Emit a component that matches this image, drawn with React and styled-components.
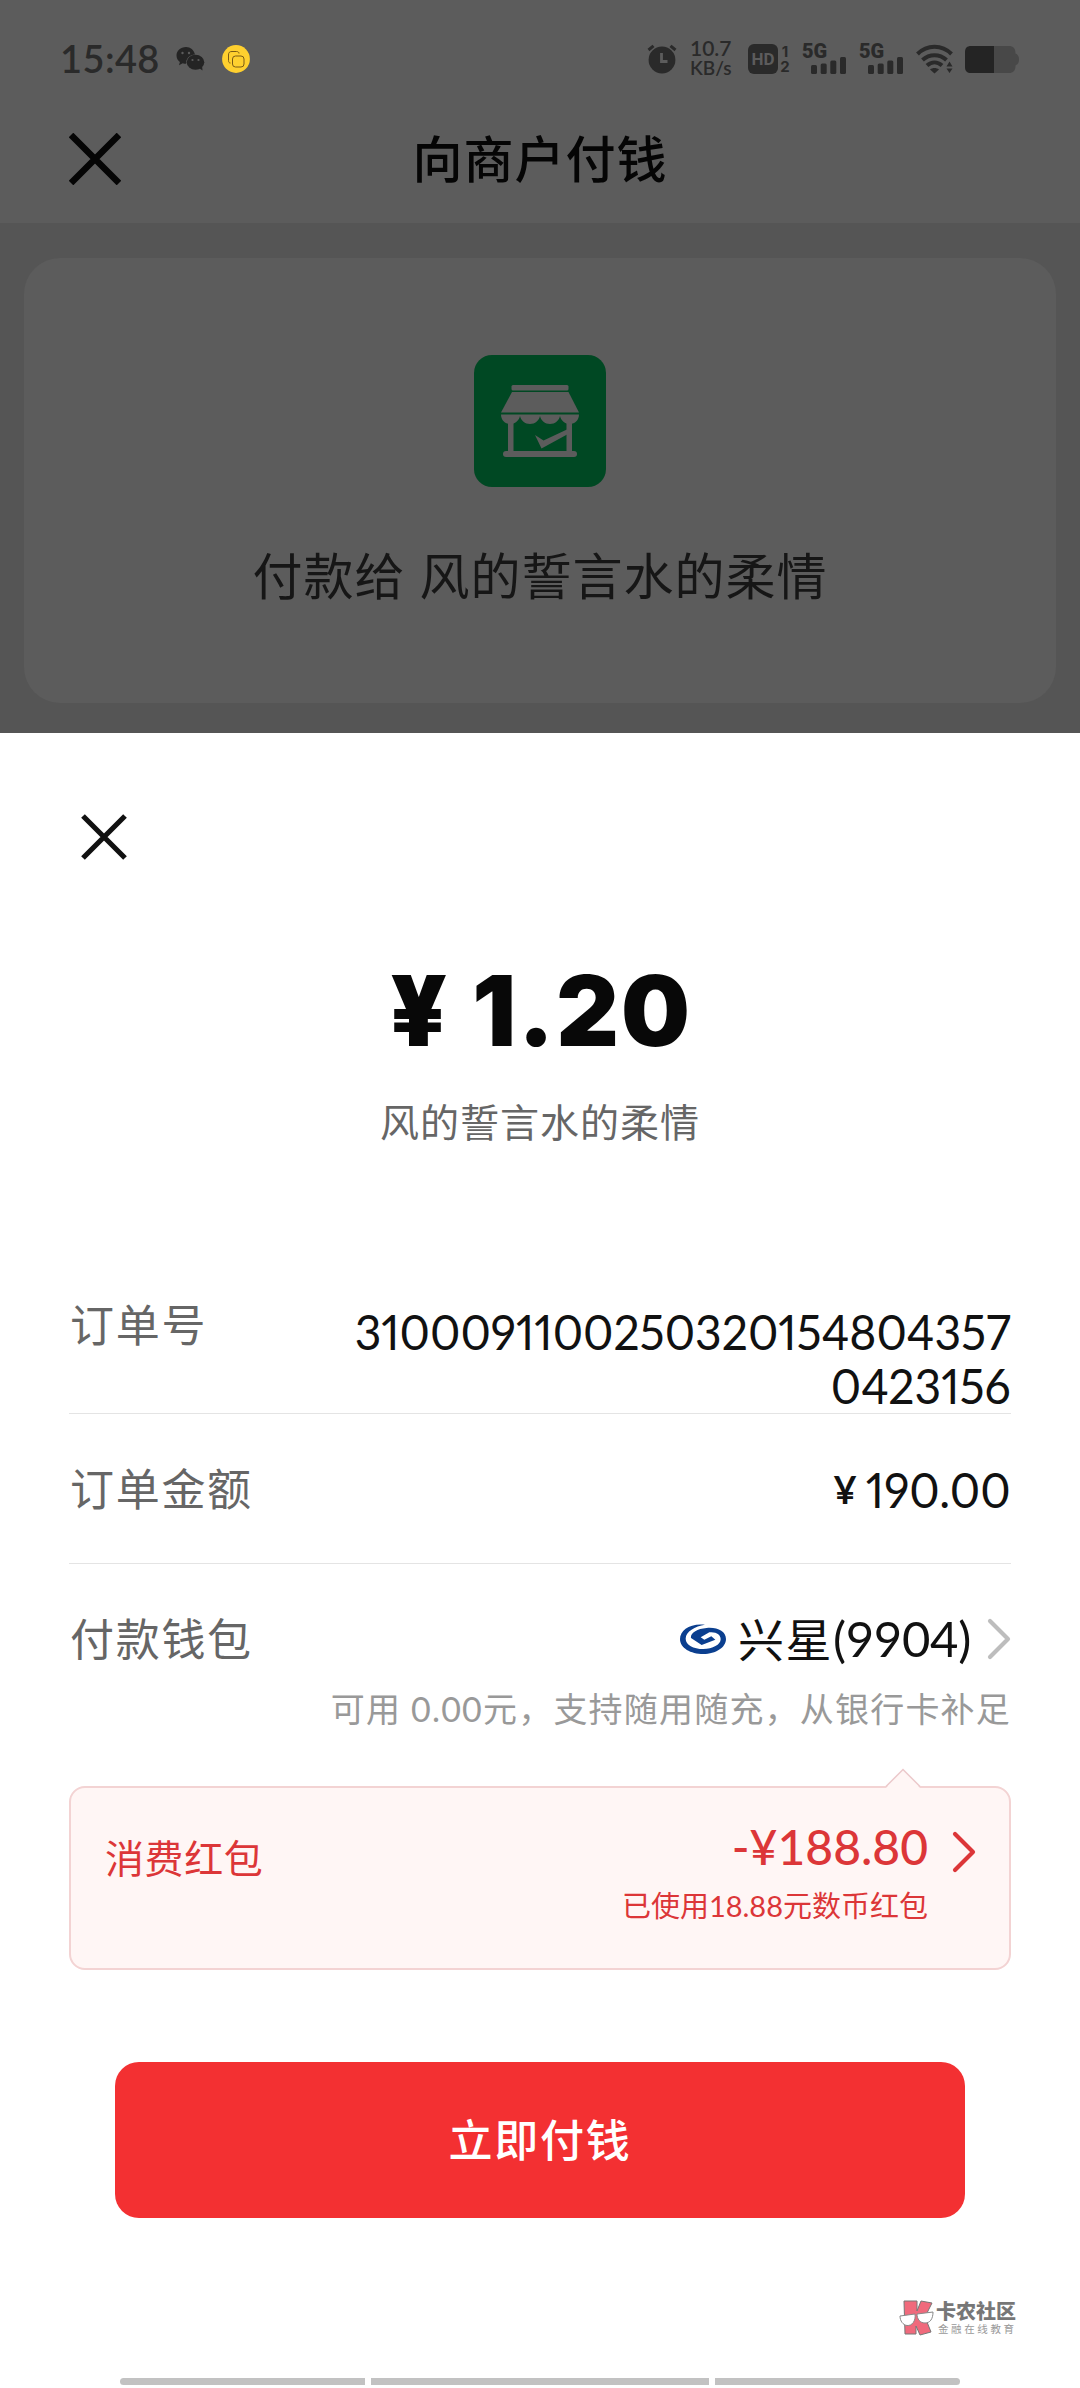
import React from 'react'
import styled, { createGlobalStyle } from 'styled-components'

const details = [
    { label: '订单号', value: ['3100091100250320154804357', '0423156'] },
    { label: '订单金额', value: ['190.00'], money: true },
]

function Close({ size, weight, color }) {
    return (
        <svg width={size} height={size} viewBox={`0 0 ${size} ${size}`} fill="none" stroke={color} strokeWidth={weight}>
            <path d={`M2 2L${size - 2} ${size - 2}M${size - 2} 2L2 ${size - 2}`} />
        </svg>
    )
}

function Chevron({ color }) {
    return (
        <svg width="24" height="42" viewBox="0 0 24 42" fill="none" stroke={color} strokeWidth="4.2" strokeLinecap="round" strokeLinejoin="round">
            <path d="M3 3L21 21L3 39" />
        </svg>
    )
}

function ChatIcon() {
    return (
        <svg width="30" height="26" viewBox="0 0 30 26">
            <path fill="#242424" d="M10 1C4.500 1 .5 4.800 .5 9.500c0 2.700 1.300 5 3.400 6.500L3 19.200l3.700-1.900c1.200.4 2.200.5 3.500.5-.5-5 3.300-9 8.800-9.200C18 4 14.500 1 10 1z" />
            <ellipse cx="19.500" cy="16.300" rx="8.800" ry="7.500" fill="#242424" />
            <path fill="#242424" d="M23 22l3.500 2.500-.5-5z" />
            <g fill="#5c5c5c">
                <circle cx="6.500" cy="7" r="1.200" />
                <circle cx="13" cy="7" r="1.200" />
                <circle cx="16.500" cy="14" r="1.100" />
                <circle cx="22.500" cy="14" r="1.100" />
            </g>
        </svg>
    )
}

function CopyBadge() {
    return (
        <svg width="28" height="28" viewBox="0 0 28 28">
            <circle cx="14" cy="14" r="13.900" fill="#ffd02f" />
            <g fill="none" stroke="#7a5a14" strokeWidth="1">
                <path d="M8.500 18C7 18 6.500 17 6.500 15.500V10C6.500 7.500 7.500 6.500 10 6.500h4.500c1.500 0 2.500.7 2.500 2" />
                <rect x="10.500" y="11" width="11.500" height="11" rx="3" />
            </g>
        </svg>
    )
}

function AlarmIcon() {
    return (
        <svg width="30" height="30" viewBox="0 0 30 30" fill="none">
            <circle cx="15" cy="16" r="13.400" fill="#2a2a2a" />
            <path d="M1.500 6L6.500 1.800M28.500 6L23.500 1.800" stroke="#2a2a2a" strokeWidth="3" />
            <path d="M14.500 9v8.500h6" stroke="#5c5c5c" strokeWidth="2.800" />
        </svg>
    )
}

function SignalBars() {
    return (
        <svg width="36" height="17" viewBox="0 0 36 17" fill="#2a2a2a">
            <rect x="0" y="8" width="6" height="9" rx="1.500" />
            <rect x="9.700" y="6.500" width="6" height="10.500" rx="1.500" />
            <rect x="19.300" y="3.500" width="6" height="13.500" rx="1.500" />
            <rect x="29" y="0" width="6" height="17" rx="1.500" />
        </svg>
    )
}

function WifiIcon() {
    return (
        <svg width="37" height="30" viewBox="0 0 37 30" fill="none" stroke="#2a2a2a" strokeWidth="4">
            <path d="M1.500 10C11 .3 26 .3 35.500 10" />
            <path d="M6.500 16C13.500 9.500 23.500 9.500 30.500 16" />
            <path d="M11 21.500c4.500-4 10.500-4 15 0" />
            <path d="M14 25.500c2.500-2 6.500-2 9 0L18.500 29.500z" fill="#2a2a2a" stroke="none" />
            <path d="M30.500 22.500L33.500 17.500L36.500 22.500zM30.500 24.500L33.500 29L36.500 24.500z" fill="#2a2a2a" stroke="none" />
        </svg>
    )
}

function BatteryIcon() {
    return (
        <svg width="54" height="27" viewBox="0 0 54 27">
            <path d="M29 0H44C48 0 50.500 2 50.500 7.500C53 8.500 54 10.500 54 13.500C54 16.500 53 18.500 50.500 19.500C50.500 25 48 27 44 27H29z" fill="#484848" />
            <path d="M6 0H29V27H6C2 27 0 25 0 21V6C0 2 2 0 6 0z" fill="#242424" />
        </svg>
    )
}

function ShopIcon() {
    return (
        <svg width="132" height="132" viewBox="0 0 132 132">
            <rect width="132" height="132" rx="18" fill="#004823" />
            <g fill="#5c5c5c">
                <rect x="37.500" y="30" width="57" height="5.500" rx="1.500" />
                <path d="M38 37H94.500L105 57.500H27z" />
                <path d="M27 59.500H105C105 65 101 69 96 69C91 69 87 65.500 86 61C85 65.500 81 69 76 69C71 69 67 65.500 66 61C65 65.500 61 69 56 69C51 69 47 65.500 46 61C45 65.500 41 69 36 69C31 69 27 65 27 59.500z" />
                <rect x="34" y="65" width="5.500" height="34" />
                <rect x="92.500" y="65" width="5.500" height="34" />
                <rect x="29" y="96" width="74" height="6" rx="3" />
                <path d="M61 80L69.500 85.500L94 74V79L67.500 93.500z" />
            </g>
        </svg>
    )
}

function BankIcon() {
    return (
        <svg width="46" height="30" viewBox="0 0 138 90" fill="#0b3f8f">
            <path d="M75 2C30 -3 0 18 0 45C0 72 32 90 70 90C108 90 138 70 138 45C138 22 112 9 80 12C50 14 30 28 33 42L65 63L106 47L94 37L73 47L62 40L88 25C110 23 122 32 122 46C122 62 98 75 70 75C40 75 17 62 17 44C17 22 45 7 75 2z" />
        </svg>
    )
}

function KMark() {
    return (
        <svg width="36" height="38" viewBox="0 0 36 38">
            <g fill="#f06a7c" stroke="#777" strokeWidth="1">
                <path d="M5 2H18V12L22 2L33 4L26 18L32 33L21 36L17 27V35H6z" />
            </g>
            <g fill="#fff" stroke="#888" strokeWidth="1">
                <path d="M1 17L16 15C17 22 13 27 8 26.500C4 26 1 22 1 17z" />
                <path d="M18 15L34 13C34 20 31 24 26 24C21 24 18 20 18 15z" />
            </g>
        </svg>
    )
}

export default function App() {
    return (
        <Screen>
            <GlobalStyle />
            <Header>
                <StatusBar>
                    <Clock>15:48</Clock>
                    <ChatIcon />
                    <CopyBadge />
                    <StatusRight>
                        <AlarmIcon />
                        <Speed><span>10.7</span><span>KB/s</span></Speed>
                        <Hd>
                            <HdBox>HD</HdBox>
                            <HdNums><span>1</span><span>2</span></HdNums>
                        </Hd>
                        <Network><span>5G</span><SignalBars /></Network>
                        <Network><span>5G</span><SignalBars /></Network>
                        <WifiIcon />
                        <BatteryIcon />
                    </StatusRight>
                </StatusBar>
                <TitleBar>
                    <Close size={52} weight={6.5} color="#050505" />
                    <Title>向商户付钱</Title>
                </TitleBar>
            </Header>
            <Merchant>
                <MerchantCard>
                    <ShopIcon />
                    <MerchantName>付款给 风的誓言水的柔情</MerchantName>
                </MerchantCard>
            </Merchant>
            <Sheet>
                <Close size={46} weight={5.2} color="#111" />
                <Amount><span>¥</span><AmountNumber>1.20</AmountNumber></Amount>
                <Payee>风的誓言水的柔情</Payee>
                <Details>
                    {details.map((row) => (
                        <Row key={row.label} $money={row.money}>
                            <Label>{row.label}</Label>
                            <Value $money={row.money}>
                                {row.money && <Yen>¥</Yen>}
                                {row.value.map((line) => <span key={line}>{line}</span>)}
                            </Value>
                        </Row>
                    ))}
                    <WalletRow>
                        <Label>付款钱包</Label>
                        <Wallet>
                            <BankIcon />
                            <WalletName>兴星<span>(9904)</span></WalletName>
                            <Chevron color="#bdbdbd" />
                        </Wallet>
                    </WalletRow>
                    <Hint>可用 0.00元，支持随用随充，从银行卡补足</Hint>
                </Details>
                <Packet>
                    <Pointer width="36" height="20" viewBox="0 0 36 20">
                        <path d="M1 20L18 1.500L35 20" fill="#fff6f5" />
                        <path d="M1 18.500L18 1.500L35 18.500" fill="none" stroke="#ecc9cb" strokeWidth="1.500" />
                    </Pointer>
                    <PacketLabel>消费红包</PacketLabel>
                    <PacketInfo>
                        <Discount>-¥188.80</Discount>
                        <Used>已使用18.88元数币红包</Used>
                    </PacketInfo>
                    <Chevron color="#dc3638" />
                </Packet>
                <PayButton>立即付钱</PayButton>
                <Watermark>
                    <KMark />
                    <div>
                        <Brand>卡农社区</Brand>
                        <Slogan>金融在线教育</Slogan>
                    </div>
                </Watermark>
                <NavBar>
                    <NavLine $width={245} />
                    <NavLine $width={338} />
                    <NavLine $width={245} />
                </NavBar>
            </Sheet>
        </Screen>
    )
}

const GlobalStyle = createGlobalStyle`
    * {
        box-sizing: border-box;
    }
    body {
        margin: 0;
        background: #fff;
    }
    svg {
        display: block;
        flex: none;
    }
`

const Screen = styled.div`
    width: 1080px;
    height: 2388px;
    overflow: hidden;
    display: flex;
    flex-direction: column;
    background: #555;
    font-family: 'Lato', 'Noto Sans CJK SC', sans-serif;
    white-space: nowrap;
`

const Header = styled.header`
    height: 223px;
    background: #5c5c5c;
`

const StatusBar = styled.div`
    height: 118px;
    padding: 0 61px 0 60px;
    display: flex;
    align-items: center;
    color: #2a2a2a;
    > svg {
        margin-left: 16px;
    }
`

const Clock = styled.span`
    width: 100px;
    margin-top: -3px;
    font-size: 38px;
    font-weight: 600;
    letter-spacing: 0.4px;
    line-height: 40px;
`

const StatusRight = styled.div`
    display: flex;
    align-items: center;
    margin-left: auto;
    > svg {
        margin-left: 12px;
    }
`

const Speed = styled.div`
    display: flex;
    flex-direction: column;
    width: 46px;
    margin: -3px 0 0 13px;
    font-size: 21px;
    font-weight: 600;
    line-height: 20px;
    > span + span {
        font-size: 19px;
    }
`

const Hd = styled.div`
    display: flex;
    margin-left: 12px;
    gap: 2px;
`

const HdBox = styled.span`
    width: 30px;
    height: 30px;
    border-radius: 6px;
    background: #2a2a2a;
    color: #5c5c5c;
    font: 700 17px/31px 'Roboto', sans-serif;
    text-align: center;
`

const HdNums = styled.div`
    display: flex;
    flex-direction: column;
    width: 10px;
    font: 700 15px/15px 'Inter', sans-serif;
    text-align: center;
`

const Network = styled.div`
    width: 45px;
    height: 30px;
    margin-left: 12px;
    font: 900 20px/15px 'Roboto', sans-serif;
    > span {
        display: block;
        height: 13px;
    }
    > svg {
        margin-left: 9px;
    }
`

const TitleBar = styled.div`
    display: flex;
    align-items: center;
    height: 82px;
    padding-left: 69px;
`

const Title = styled.h1`
    flex: 1;
    margin: -6px 121px 0 0;
    text-align: center;
    font-size: 50px;
    font-weight: 500;
    letter-spacing: 1px;
    color: #050505;
`

const Merchant = styled.section`
    height: 510px;
    padding: 35px 24px 30px;
`

const MerchantCard = styled.div`
    height: 445px;
    padding-top: 97px;
    border-radius: 36px;
    background: #5c5c5c;
    display: flex;
    flex-direction: column;
    align-items: center;
`

const MerchantName = styled.p`
    margin: 52px 0 0;
    font-size: 50px;
    line-height: 74px;
    letter-spacing: 1px;
    color: #161616;
`

const Sheet = styled.main`
    flex: 1;
    display: flex;
    flex-direction: column;
    padding: 81px 69px 0;
    background: #fff;
    > svg {
        margin-left: 12px;
    }
`

const Amount = styled.div`
    display: flex;
    justify-content: center;
    gap: 25px;
    margin-top: 101px;
    font: 900 97px/100px 'Inter', sans-serif;
    color: #080808;
`

const AmountNumber = styled.span`
    margin-right: -2px;
    letter-spacing: 2px;
`

const Payee = styled.p`
    margin: 31px 0 0;
    text-align: center;
    font-size: 39px;
    line-height: 60px;
    letter-spacing: 1px;
    color: #666;
`

const Details = styled.div`
    margin-top: 112px;
`

const Row = styled.div`
    display: flex;
    justify-content: space-between;
    align-items: ${props => props.$money ? "center" : "flex-start"};
    height: 150px;
    padding-top: ${props => props.$money ? "0" : "31px"};
    border-bottom: 1.5px solid #e4e4e4;
`

const Label = styled.span`
    margin-left: 1px;
    font-size: 44px;
    line-height: 60px;
    letter-spacing: 1.700px;
    color: #666;
`

const Value = styled.div`
    display: flex;
    flex-direction: ${props => props.$money ? "row" : "column"};
    align-items: ${props => props.$money ? "center" : "flex-end"};
    padding-top: ${props => props.$money ? "0" : "9px"};
    font-size: 49px;
    line-height: 54px;
    font-feature-settings: 'pnum';
    color: #111;
    transform: scaleX(0.943);
    transform-origin: right;
`

const Yen = styled.span`
    margin-right: 9px;
    font-size: 38px;
    font-weight: 700;
`

const WalletRow = styled.div`
    display: flex;
    justify-content: space-between;
    align-items: center;
    height: 150px;
`

const Wallet = styled.div`
    display: flex;
    align-items: center;
`

const WalletName = styled.span`
    margin: -4px 16px 0 12px;
    font-size: 46px;
    letter-spacing: 1.5px;
    color: #111;
    > span {
        font-size: 49px;
        letter-spacing: -0.3px;
    }
`

const Hint = styled.p`
    margin: -30px 0 0;
    text-align: right;
    font-size: 34px;
    line-height: 50px;
    letter-spacing: 1.200px;
    color: #999;
`

const Packet = styled.div`
    position: relative;
    display: flex;
    height: 184px;
    margin-top: 52px;
    padding: 43px 33px 0 34px;
    border: 2px solid #f3d3d3;
    border-radius: 16px;
    background: #fff6f5;
    color: #dc3638;
`

const Pointer = styled.svg`
    position: absolute;
    top: -20px;
    left: 814px;
`

const PacketLabel = styled.span`
    font-size: 39px;
    line-height: 54px;
    letter-spacing: 0.6px;
`

const PacketInfo = styled.div`
    margin-top: -9px;
    margin-left: auto;
    margin-right: 24px;
    text-align: right;
`

const Discount = styled.div`
    font-size: 48px;
    font-weight: 500;
    line-height: 50px;
`

const Used = styled.div`
    margin-top: 14px;
    font-size: 29px;
    line-height: 40px;
`

const PayButton = styled.button`
    width: 850px;
    height: 156px;
    margin: 92px auto 0;
    padding-bottom: 6px;
    border: 0;
    border-radius: 24px;
    background: #f33032;
    color: #fff;
    font: 500 44px 'Noto Sans CJK SC', sans-serif;
    letter-spacing: 1.700px;
`

const Watermark = styled.div`
    display: flex;
    align-self: flex-end;
    width: 112px;
    height: 38px;
    margin-top: 81px;
    gap: 1px;
`

const Brand = styled.div`
    font-size: 20px;
    font-weight: 900;
    line-height: 24px;
    color: #777;
`

const Slogan = styled.div`
    font-size: 10.500px;
    line-height: 13px;
    padding-left: 2px;
    letter-spacing: 2.600px;
    color: #999;
`

const NavBar = styled.div`
    display: flex;
    justify-content: center;
    gap: 6px;
    margin-top: 41px;
`

const NavLine = styled.span`
    width: ${props => props.$width}px;
    height: 7px;
    background: #c2c2c2;
    &:first-child {
        border-radius: 4px 0 0 4px;
    }
    &:last-child {
        border-radius: 0 4px 4px 0;
    }
`
